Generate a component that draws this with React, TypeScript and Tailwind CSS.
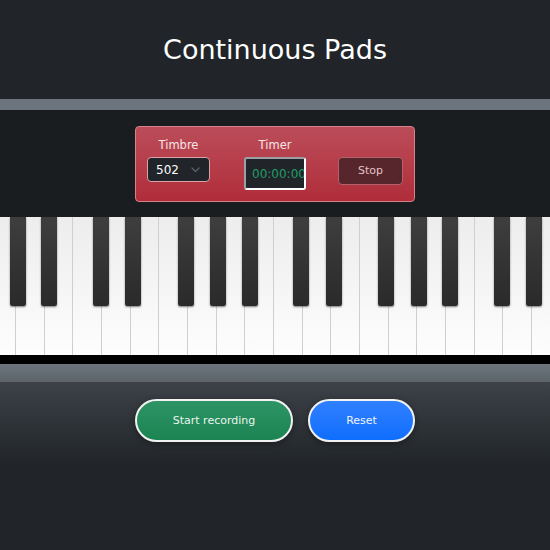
import React from 'react';

const WHITE_KEYS = Array.from({ length: 20 }, (_, i) => i);
// left offsets of the black keys, measured against the white key row
const BLACK_KEYS = [10, 41, 93, 125, 178, 210, 242, 293, 326, 378, 411, 442, 494, 526];

function Chevron() {
  return (
    <svg width="9" height="6" viewBox="0 0 9 6" fill="none" className="text-[#5c636a]">
      <path d="M1 1l3.5 3.5L8 1" stroke="currentColor" strokeWidth="1.2" strokeLinecap="round" strokeLinejoin="round" />
    </svg>
  );
}

export default function App() {
  return (
    <div className="min-h-[550px] bg-[#212529] font-['DejaVu_Sans',sans-serif]">
      {/* Title */}
      <header className="h-[99px] flex items-center justify-center">
        <h1 className="text-[27px] text-white leading-none">Continuous Pads</h1>
      </header>

      <div className="h-[11px] bg-[#6c757d]" />

      {/* Control panel */}
      <section className="h-[107px] bg-[#1a1d20] flex justify-center pt-[16px]">
        <div className="w-[280px] h-[76px] rounded-[4px] border border-[#d4838d] bg-gradient-to-b from-[#bb4c59] to-[#b02c3a] flex items-start pl-[11px] pt-[11px]">
          <div className="w-[63px] flex flex-col items-center">
            <span className="text-[11.5px] leading-[14px] text-[#f6e4e6]">Timbre</span>
            <div className="mt-[5px] w-[63px] h-[25px] bg-[#212529] border border-[#d9a3aa] rounded-[4px] flex items-center justify-between pl-[8px] pr-[9px]">
              <span className="text-[12px] text-white">502</span>
              <Chevron />
            </div>
          </div>

          <div className="w-[62px] ml-[34px] flex flex-col items-center">
            <span className="text-[11.5px] leading-[14px] text-[#f6e4e6]">Timer</span>
            <div className="mt-[5px] w-[62px] h-[33px] bg-[#212529] rounded-[3px] border-2 border-t-[#9aa0a6] border-l-[#9aa0a6] border-b-white border-r-white overflow-hidden flex items-center pl-[6px]">
              <span className="text-[12px] text-[#1f9e68] whitespace-nowrap">00:00:00</span>
            </div>
          </div>

          <div className="w-[65px] ml-[32px] pt-[19px]">
            <button className="w-[65px] h-[28px] rounded-[4px] border border-[#b4616b] bg-[#57252c] text-[11px] text-[#e3c3c7] flex items-center justify-center pt-[1px]">
              Stop
            </button>
          </div>
        </div>
      </section>

      {/* Keyboard */}
      <div className="relative h-[138px] overflow-hidden bg-white">
        <div className="flex h-full ml-[-12.6px]">
          {WHITE_KEYS.map((k) => (
            <div
              key={k}
              className="w-[28.67px] shrink-0 h-full border-r border-[#cfcfcf] bg-gradient-to-b from-[#ededed] to-[#fdfdfd]"
            />
          ))}
        </div>
        {BLACK_KEYS.map((left) => (
          <div
            key={left}
            className="absolute top-0 h-[89px] w-[16px] rounded-b-[2px] bg-gradient-to-b from-[#3e3e3e] to-[#2a2a2a] shadow-[0_1px_2px_rgba(0,0,0,0.5)]"
            style={{ left }}
          />
        ))}
      </div>
      <div className="h-[9px] bg-black" />
      <div className="h-[18px] bg-gradient-to-b from-[#6c757d] to-[#5d646b]" />

      {/* Actions */}
      <section className="h-[83px] bg-gradient-to-b from-[#3d4248] to-[#212529] flex justify-center items-start gap-[15px] pt-[17px]">
        <button className="w-[158px] h-[43px] pt-[2px] rounded-full border-2 border-[#f2f2f2] bg-gradient-to-b from-[#2e9466] to-[#1a8452] text-[11px] text-[#eaf5ee] shadow-[0_2px_6px_rgba(0,0,0,0.35)]">
          Start recording
        </button>
        <button className="w-[107px] h-[43px] pt-[2px] rounded-full border-2 border-[#f2f2f2] bg-gradient-to-b from-[#2f80ff] to-[#0d6efd] text-[11px] text-[#eef4ff] shadow-[0_2px_6px_rgba(0,0,0,0.35)]">
          Reset
        </button>
      </section>
    </div>
  );
}
